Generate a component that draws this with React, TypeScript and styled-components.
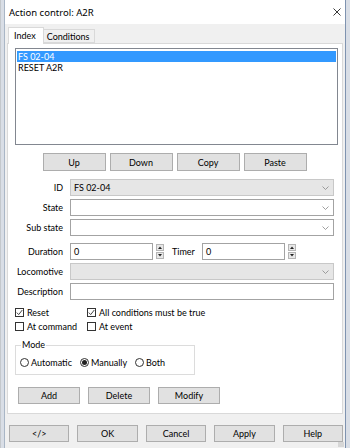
import styled, { createGlobalStyle } from 'styled-components';

const GlobalStyle = createGlobalStyle`
  html, body {
    margin: 0;
    padding: 0;
    background: #d9dee6;
  }
  body {
    font-family: Lato, 'Noto Sans', 'Liberation Sans', sans-serif;
    font-size: 9px;
    color: #000;
  }
`;

const Page = styled.div`
  display: flex;
  height: 448px;
  padding-left: 3px;
  border-left: 1px solid #c4c8cc;
  box-sizing: border-box;
  width: 350px;
`;

const Window = styled.div`
  position: relative;
  width: 342px;
  height: 448px;
  box-sizing: border-box;
  background: #f0f0f0;
  border-left: 1px solid #a9b6c6;
  border-right: 1px solid #7f93b0;
  display: flex;
  flex-direction: column;
`;

const TitleBar = styled.div`
  height: 24px;
  flex: none;
  background: #fff;
  display: flex;
  align-items: center;
  justify-content: space-between;
  padding: 0 4px 0 4px;
  font-family: 'Noto Sans', sans-serif;
  font-size: 9.5px;
`;

const CloseIcon = () => (
  <svg width="8" height="8" viewBox="0 0 8 8">
    <path d="M0.5 0.5 L7.5 7.5 M7.5 0.5 L0.5 7.5" stroke="#222" strokeWidth="0.9" />
  </svg>
);

const Body = styled.div`
  flex: 1;
  display: flex;
  flex-direction: column;
  padding: 3px 2px 0 2px;
`;

const TabStrip = styled.div`
  display: flex;
  align-items: flex-end;
  height: 16px;
  padding-left: 1px;
  position: relative;
  z-index: 1;
`;

const Tab = styled.div<{ $active?: boolean }>`
  box-sizing: border-box;
  height: ${(p) => (p.$active ? '17px' : '14px')};
  margin-bottom: ${(p) => (p.$active ? '-1px' : '0')};
  padding: ${(p) => (p.$active ? '2px 7px 0 5px' : '1px 4px 0 3px')};
  background: ${(p) => (p.$active ? '#fff' : '#f0f0f0')};
  border: 1px solid #d9d9d9;
  border-bottom: ${(p) => (p.$active ? 'none' : '1px solid #d9d9d9')};
  margin-left: ${(p) => (p.$active ? '0' : '-1px')};
`;

const Panel = styled.div`
  height: 371px;
  box-sizing: border-box;
  background: #fff;
  border: 1px solid #d9d9d9;
  padding: 4px 4px 0 7px;
  display: flex;
  flex-direction: column;
`;

const List = styled.div`
  height: 97px;
  box-sizing: border-box;
  border: 1px solid #828790;
  padding: 2px 1px;
`;

const ListItem = styled.div<{ $selected?: boolean }>`
  height: 11px;
  line-height: 11px;
  padding-left: 1px;
  background: ${(p) => (p.$selected ? '#3399ff' : 'transparent')};
  color: ${(p) => (p.$selected ? '#fff' : '#000')};
`;

const ButtonRow = styled.div`
  margin-top: 8px;
  display: flex;
  gap: 4px;
  justify-content: center;
  padding-right: 4px;
`;

const Button = styled.div`
  width: 63px;
  height: 18px;
  box-sizing: border-box;
  background: #e1e1e1;
  border: 1px solid #adadad;
  display: flex;
  align-items: center;
  justify-content: center;
`;

const Form = styled.div`
  margin-top: 8px;
  display: grid;
  grid-template-columns: 48px 1fr;
  column-gap: 7px;
  row-gap: 3px;
  align-items: center;
  padding-right: 4px;
`;

const Label = styled.div`
  text-align: right;
  white-space: nowrap;
`;

const Field = styled.div<{ $disabled?: boolean }>`
  height: 17px;
  box-sizing: border-box;
  background: ${(p) => (p.$disabled ? '#e6e6e6' : '#fff')};
  border: 1px solid ${(p) => (p.$disabled ? '#c8c8c8' : '#a3a3a3')};
  display: flex;
  align-items: center;
  justify-content: space-between;
  padding: 0 4px 0 3px;
`;

const Chevron = () => (
  <svg width="7" height="4" viewBox="0 0 7 4">
    <path d="M0.5 0.5 L3.5 3.5 L6.5 0.5" stroke="#888" strokeWidth="0.8" fill="none" />
  </svg>
);

const Combo = ({ value, disabled }: { value?: string; disabled?: boolean }) => (
  <Field $disabled={disabled}>
    <span>{value}</span>
    <Chevron />
  </Field>
);

const Gap = styled.div`
  grid-column: 1 / -1;
  height: 1px;
`;

const SpinRow = styled.div`
  display: flex;
  align-items: center;
`;

const NumField = styled(Field)`
  width: 83px;
`;

const Spinner = styled.div`
  margin-left: 3px;
  width: 8px;
  height: 15px;
  display: flex;
  flex-direction: column;
  gap: 1px;
`;

const SpinHalf = styled.div`
  flex: 1;
  background: #e8e8e8;
  border: 1px solid #b5b5b5;
  display: flex;
  align-items: center;
  justify-content: center;
`;

const Arrow = ({ up }: { up?: boolean }) => (
  <svg width="4" height="3" viewBox="0 0 4 3">
    <path d={up ? 'M0 3 L2 0.5 L4 3 Z' : 'M0 0 L2 2.5 L4 0 Z'} fill="#222" />
  </svg>
);

const Spin = () => (
  <Spinner>
    <SpinHalf>
      <Arrow up />
    </SpinHalf>
    <SpinHalf>
      <Arrow />
    </SpinHalf>
  </Spinner>
);

const TimerLabel = styled.div`
  margin-left: 8px;
  width: 30px;
`;

const Checks = styled.div`
  margin-top: 8px;
  display: grid;
  grid-template-columns: 72px 1fr;
  row-gap: 5px;
`;

const CheckItem = styled.div`
  display: flex;
  align-items: center;
  gap: 3px;
  height: 9px;
`;

const Box = styled.div`
  width: 9px;
  height: 9px;
  box-sizing: border-box;
  border: 1px solid #333;
  background: #fff;
  display: flex;
  align-items: center;
  justify-content: center;
`;

const Check = ({ checked, label }: { checked?: boolean; label: string }) => (
  <CheckItem>
    <Box>
      {checked && (
        <svg width="7" height="7" viewBox="0 0 7 7">
          <path d="M0.8 3.6 L2.7 5.6 L6.3 1" stroke="#333" strokeWidth="0.9" fill="none" />
        </svg>
      )}
    </Box>
    <span>{label}</span>
  </CheckItem>
);

const GroupBox = styled.fieldset`
  margin: 8px 0 0 0;
  width: 180px;
  box-sizing: border-box;
  border: 1px solid #dcdcdc;
  padding: 0 4px 1px 4px;
`;

const Legend = styled.legend`
  padding: 0 1px;
  margin-left: 1px;
  font-size: 9px;
  line-height: 12px;
`;

const RadioRow = styled.div`
  height: 22px;
  display: flex;
  gap: 8px;
  align-items: center;
`;

const RadioItem = styled.div`
  display: flex;
  align-items: center;
  gap: 2px;
`;

const RadioCircle = styled.div`
  width: 9px;
  height: 9px;
  box-sizing: border-box;
  border: 1px solid #333;
  border-radius: 50%;
  background: #fff;
  display: flex;
  align-items: center;
  justify-content: center;
`;

const RadioDot = styled.div`
  width: 5px;
  height: 5px;
  border-radius: 50%;
  background: #222;
`;

const Radio = ({ selected, label }: { selected?: boolean; label: string }) => (
  <RadioItem>
    <RadioCircle>{selected && <RadioDot />}</RadioCircle>
    <span>{label}</span>
  </RadioItem>
);

const ActionRow = styled.div`
  margin-top: 12px;
  padding-left: 3px;
  display: flex;
  gap: 8px;
`;

const ActionButton = styled(Button)`
  width: 62px;
  height: 17px;
`;

const Footer = styled.div`
  margin-top: 11px;
  display: flex;
  gap: 8px;
  padding-left: 2px;
`;

const FooterButton = styled(Button)`
  width: 61px;
  height: 17px;
`;

const Grip = styled.div`
  position: absolute;
  right: 1px;
  bottom: 1px;
  width: 6px;
  height: 5px;
  background-image: radial-gradient(#b8b8b8 0.6px, transparent 0.8px);
  background-size: 2px 2px;
`;

export default function App() {
  return (
    <Page>
      <GlobalStyle />
      <Window>
        <TitleBar>
          <span>Action control: A2R</span>
          <CloseIcon />
        </TitleBar>
        <Body>
          <TabStrip>
            <Tab $active>Index</Tab>
            <Tab>Conditions</Tab>
          </TabStrip>
          <Panel>
            <List>
              <ListItem $selected>FS 02-04</ListItem>
              <ListItem>RESET A2R</ListItem>
            </List>
            <ButtonRow>
              <Button>Up</Button>
              <Button>Down</Button>
              <Button>Copy</Button>
              <Button>Paste</Button>
            </ButtonRow>
            <Form>
              <Label>ID</Label>
              <Combo value="FS 02-04" disabled />
              <Label>State</Label>
              <Combo />
              <Label>Sub state</Label>
              <Combo />
              <Gap />
              <Label>Duration</Label>
              <SpinRow>
                <NumField>0</NumField>
                <Spin />
                <TimerLabel>Timer</TimerLabel>
                <NumField>0</NumField>
                <Spin />
              </SpinRow>
              <Label>Locomotive</Label>
              <Combo disabled />
              <Label>Description</Label>
              <Field />
            </Form>
            <Checks>
              <Check checked label="Reset" />
              <Check checked label="All conditions must be true" />
              <Check label="At command" />
              <Check label="At event" />
            </Checks>
            <GroupBox>
              <Legend>Mode</Legend>
              <RadioRow>
                <Radio label="Automatic" />
                <Radio selected label="Manually" />
                <Radio label="Both" />
              </RadioRow>
            </GroupBox>
            <ActionRow>
              <ActionButton>Add</ActionButton>
              <ActionButton>Delete</ActionButton>
              <ActionButton>Modify</ActionButton>
            </ActionRow>
          </Panel>
          <Footer>
            <FooterButton>&lt;/&gt;</FooterButton>
            <FooterButton>OK</FooterButton>
            <FooterButton>Cancel</FooterButton>
            <FooterButton>Apply</FooterButton>
            <FooterButton>Help</FooterButton>
          </Footer>
        </Body>
        <Grip />
      </Window>
    </Page>
  );
}
